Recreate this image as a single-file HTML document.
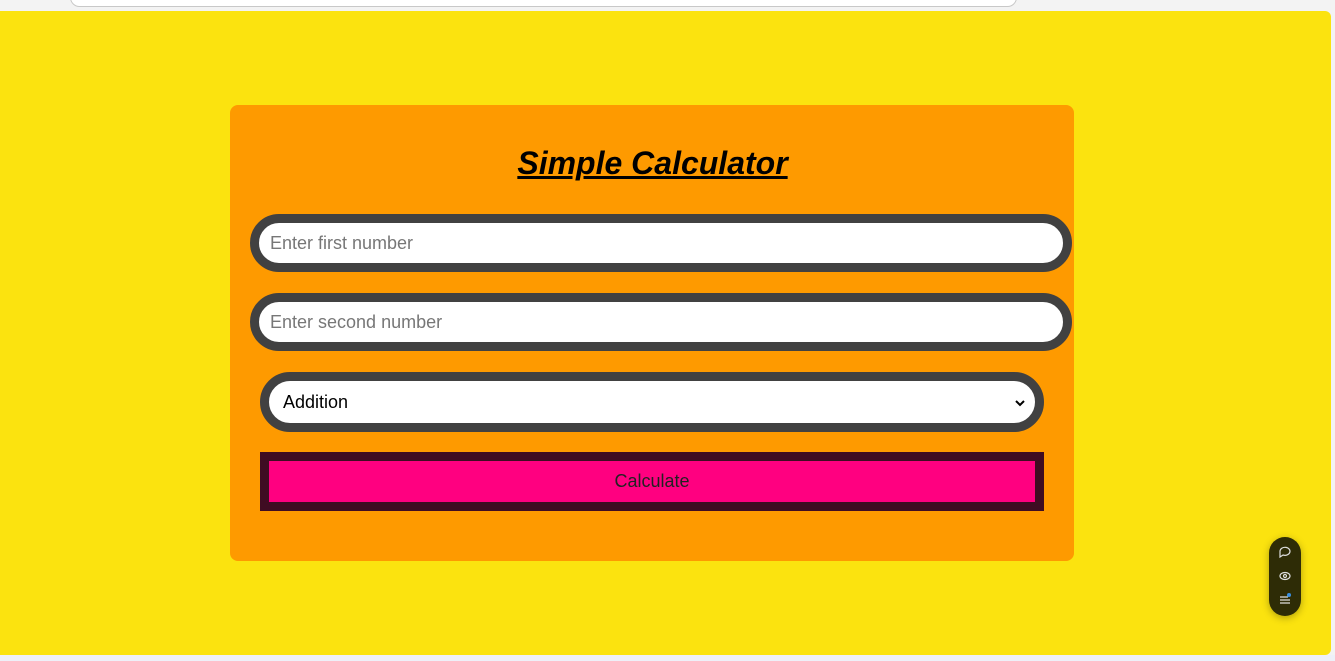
<!DOCTYPE html>
<html><head><style>
*{margin:0;padding:0;box-sizing:border-box}
body{width:1335px;height:661px;background:#f3f3f3;position:relative;overflow:hidden;font-family:"Liberation Sans",Arial,sans-serif}
.addr{position:absolute;left:70px;top:-12px;width:947px;height:19px;background:#fff;border:1px solid #c8c8c8;border-radius:10px}
.page{position:absolute;left:0;top:11px;width:1331px;height:644px;background:#fbe30f;border-radius:0 6px 6px 0}
.bottom{position:absolute;left:0;top:655px;width:1335px;height:6px;background:#eef0f8}
.card{position:absolute;left:230px;top:105px;width:844px;height:456px;background:#fe9a00;border-radius:8px}
h1{position:absolute;left:0;width:1305px;top:145px;text-align:center;font-size:32px;font-style:italic;font-weight:bold;text-decoration:underline;color:#000}
.in{position:absolute;background:#fff;border:9px solid #414141;border-radius:30px;font-size:18px;color:#777;padding-left:11px;display:flex;align-items:center}
.btn{position:absolute;left:260px;top:452px;width:784px;height:59px;background:#ff0080;border:9px solid #3f0c22;display:flex;align-items:center;justify-content:center;font-size:18px;color:#222}
.pill{position:absolute;left:1269px;top:537px;width:32px;height:79px;background:#2e2c06;border-radius:16px;box-shadow:0 2px 8px rgba(0,0,0,.3)}
</style></head><body>
<div class="addr"></div>
<div class="page"></div>
<div class="bottom"></div>
<div class="card"></div>
<h1>Simple Calculator</h1>
<div class="in" style="left:250px;top:214px;width:822px;height:58px">Enter first number</div>
<div class="in" style="left:250px;top:293px;width:822px;height:58px">Enter second number</div>
<div class="in" style="left:260px;top:372px;width:784px;height:60px;color:#000;padding-left:14px">Addition
<svg style="position:absolute;right:10px;top:18px" width="10" height="8" viewBox="0 0 10 8"><path d="M1 2l4 4 4-4" stroke="#000" stroke-width="2" fill="none"/></svg></div>
<div class="btn">Calculate</div>
<div class="pill">
<svg width="32" height="79" viewBox="0 0 32 79"><g stroke="#ddd" stroke-width="1.2" fill="none">
<path d="M11 14a5 4 0 1 1 3 4l-3 2z"/>
<ellipse cx="16" cy="39" rx="5" ry="3.5"/><circle cx="16" cy="39" r="1.5"/>
<path d="M11 60h8M11 63h10M11 66h10"/></g><circle cx="20" cy="58" r="2" fill="#3b8fe0"/></svg>
</div>
</body></html>
